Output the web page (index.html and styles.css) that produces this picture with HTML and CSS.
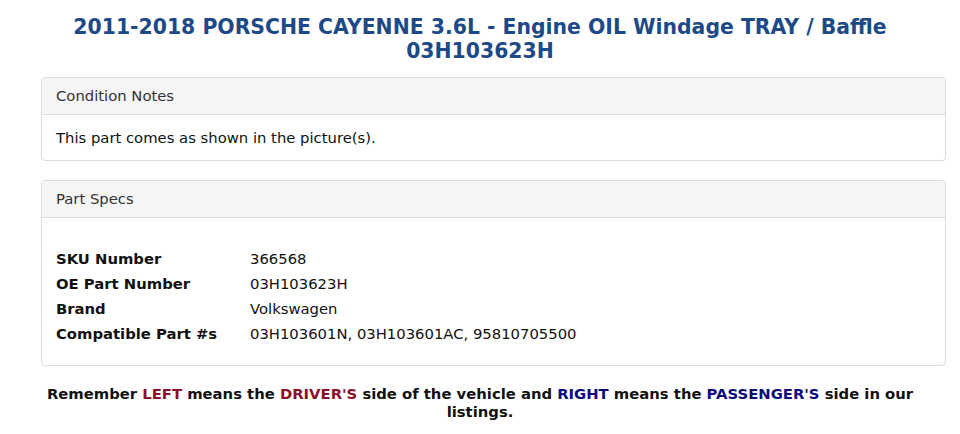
FILE: index.html
```html
<!DOCTYPE html>
<html>
<head>
<meta charset="utf-8">
<link rel="stylesheet" href="styles.css">
</head>
<body>
<h1 class="title">2011-2018 PORSCHE CAYENNE 3.6L - Engine OIL Windage TRAY / Baffle 03H103623H</h1>
<div class="panel">
  <div class="panel-head">Condition Notes</div>
  <div class="panel-body">This part comes as shown in the picture(s).</div>
</div>
<div class="panel">
  <div class="panel-head">Part Specs</div>
  <div class="panel-body specs-body">
    <table class="specs">
      <tr><th>SKU Number</th><td>366568</td></tr>
      <tr><th>OE Part Number</th><td>03H103623H</td></tr>
      <tr><th>Brand</th><td>Volkswagen</td></tr>
      <tr><th>Compatible Part #s</th><td>03H103601N, 03H103601AC, 95810705500</td></tr>
    </table>
  </div>
</div>
<p class="note">Remember <span class="left">LEFT</span> means the <span class="left">DRIVER'S</span> side of the vehicle and <span class="right">RIGHT</span> means the <span class="right">PASSENGER'S</span> side in our listings.</p>
</body>
</html>
```
FILE: styles.css
```css
html, body {
  margin: 0;
  padding: 0;
  background: #fff;
}
body {
  font-family: "DejaVu Sans", Verdana, sans-serif;
  font-size: 14.8px;
  color: #111;
}
.title {
  margin: 15px 50px 14px 50px;
  font-size: 20.4px;
  line-height: 24px;
  font-weight: bold;
  color: #1d4a87;
  text-align: center;
}
.panel {
  margin: 0 14px 19px 41px;
  border: 1px solid #dcdcdc;
  border-radius: 4px;
  overflow: hidden;
}
.panel-head {
  background: #f5f5f5;
  border-bottom: 1px solid #dcdcdc;
  padding: 9px 14px 9px 14px;
  line-height: 18px;
  color: #333;
}
.panel-body {
  padding: 14px 14px 13px 14px;
  line-height: 18px;
  color: #111;
}
.specs-body {
  padding: 28px 14px 19px 14px;
}
.specs {
  border-collapse: collapse;
}
.specs th {
  text-align: left;
  font-weight: bold;
  width: 194px;
  padding: 0;
  height: 25px;
  color: #111;
}
.specs td {
  padding: 0;
  height: 25px;
}
.note {
  margin: 15px 40px 0 40px;
  font-weight: bold;
  text-align: center;
  line-height: 18px;
  color: #111;
}
.left {
  color: #8a0f2e;
}
.right {
  color: #0b0b7a;
}
```
